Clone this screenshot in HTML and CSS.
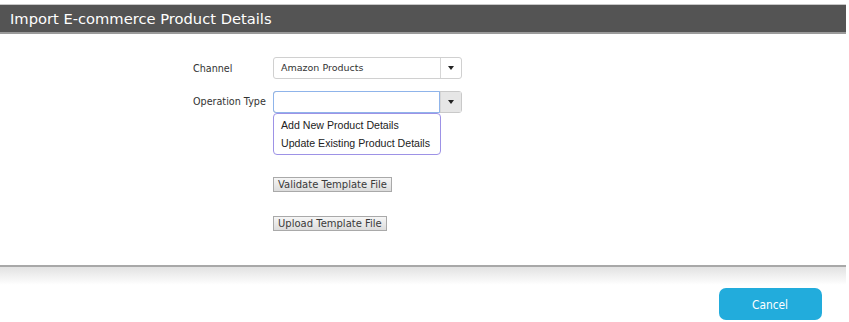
FILE: index.html
```html
<!DOCTYPE html>
<html>
<head>
<meta charset="utf-8">
<link rel="stylesheet" href="styles.css">
</head>
<body>
<div class="dialog">
  <div class="header">Import E-commerce Product Details</div>
  <div class="body">
    <div class="row">
      <div class="label">Channel</div>
      <div class="select">
        <div class="value">Amazon Products</div>
        <div class="arrow"><span class="tri"></span></div>
      </div>
    </div>
    <div class="row row-op">
      <div class="label">Operation Type</div>
      <div class="field">
        <div class="select open">
          <div class="value"></div>
          <div class="arrow"><span class="tri"></span></div>
        </div>
        <ul class="menu">
          <li>Add New Product Details</li>
          <li>Update Existing Product Details</li>
        </ul>
      </div>
    </div>
    <div class="btnrow first"><button class="btn">Validate Template File</button></div>
    <div class="btnrow"><button class="btn">Upload Template File</button></div>
  </div>
  <div class="divider"></div>
  <div class="footer"><button class="cancel"><span>Cancel</span></button></div>
</div>
</body>
</html>
```

FILE: styles.css
```css
* { box-sizing: border-box; }
body {
  margin: 0;
  background: #fff;
  font-family: "DejaVu Sans", Verdana, sans-serif;
  width: 849px;
  height: 322px;
  overflow: hidden;
}
.dialog { width: 846px; padding-top: 4px; }
.header {
  height: 30px;
  background: #545454;
  border-top: 1px solid #c8c8c8;
  border-bottom: 2px solid #9a9a9a;
  color: #fff;
  font-size: 14.7px;
  line-height: 27px;
  padding-left: 10px;
}
.body { padding: 23px 0 0 193px; height: 231px; }
.row { display: flex; align-items: center; height: 22px; }
.row-op { margin-top: 12px; align-items: flex-start; height: auto; }
.label {
  width: 80px;
  font-size: 9.6px;
  color: #333;
}
.row-op .label { padding-top: 5px; }
.select {
  width: 189px;
  height: 22px;
  border: 1px solid #d0d0d0;
  border-radius: 3px;
  display: flex;
  background: #fff;
}
.value {
  flex: 1;
  font-size: 9.5px;
  color: #333;
  padding-left: 7px;
  line-height: 19px;
}
.arrow {
  width: 21px;
  border-left: 1px solid #d6d6d6;
  display: flex;
  align-items: center;
  justify-content: center;
}
.tri {
  width: 0; height: 0;
  border-left: 3.5px solid transparent;
  border-right: 3.5px solid transparent;
  border-top: 4px solid #222;
}
.select.open { border-color: #c9c9c9; }
.select.open .value {
  border: 1px solid #8fb4ea;
  margin: -1px 0 -1px -1px;
  border-radius: 3px 0 0 3px;
}
.select.open .arrow { background: #e6e6e6; }
.field { width: 189px; }
.menu {
  list-style: none;
  margin: 0;
  padding: 2px 0;
  width: 168px;
  height: 42px;
  border: 1px solid #9d92e6;
  border-radius: 4px;
  font-family: "Liberation Sans", Arial, sans-serif;
  font-size: 10.6px;
  color: #222;
}
.menu li { padding-left: 7px; height: 18px; line-height: 18px; }
.btnrow { padding-left: 80px; display: flex; }
.btnrow.first { margin-top: 22px; }
.btnrow + .btnrow { margin-top: 24px; }
.btn {
  font-family: "DejaVu Sans", Verdana, sans-serif;
  font-size: 10px;
  color: #3a3a3a;
  height: 15px;
  padding: 0 4px;
  border: 1px solid #a9a9a9;
  background: linear-gradient(#f6f6f6, #dcdcdc);
  border-radius: 0;
  line-height: 12px;
}
.divider {
  height: 20px;
  border-top: 2px solid #a8a8a8;
  background: linear-gradient(#e2e2e2, #fff);
}
.footer { display: flex; justify-content: flex-end; padding: 3px 24px 0 0; }
.cancel {
  width: 103px;
  height: 32px;
  border: none;
  border-radius: 7px;
  background: #22acdc;
  color: #fff;
  font-family: "DejaVu Sans", sans-serif;
  font-size: 13px;
}
.cancel span { display: inline-block; transform: scaleX(0.82); }
```
